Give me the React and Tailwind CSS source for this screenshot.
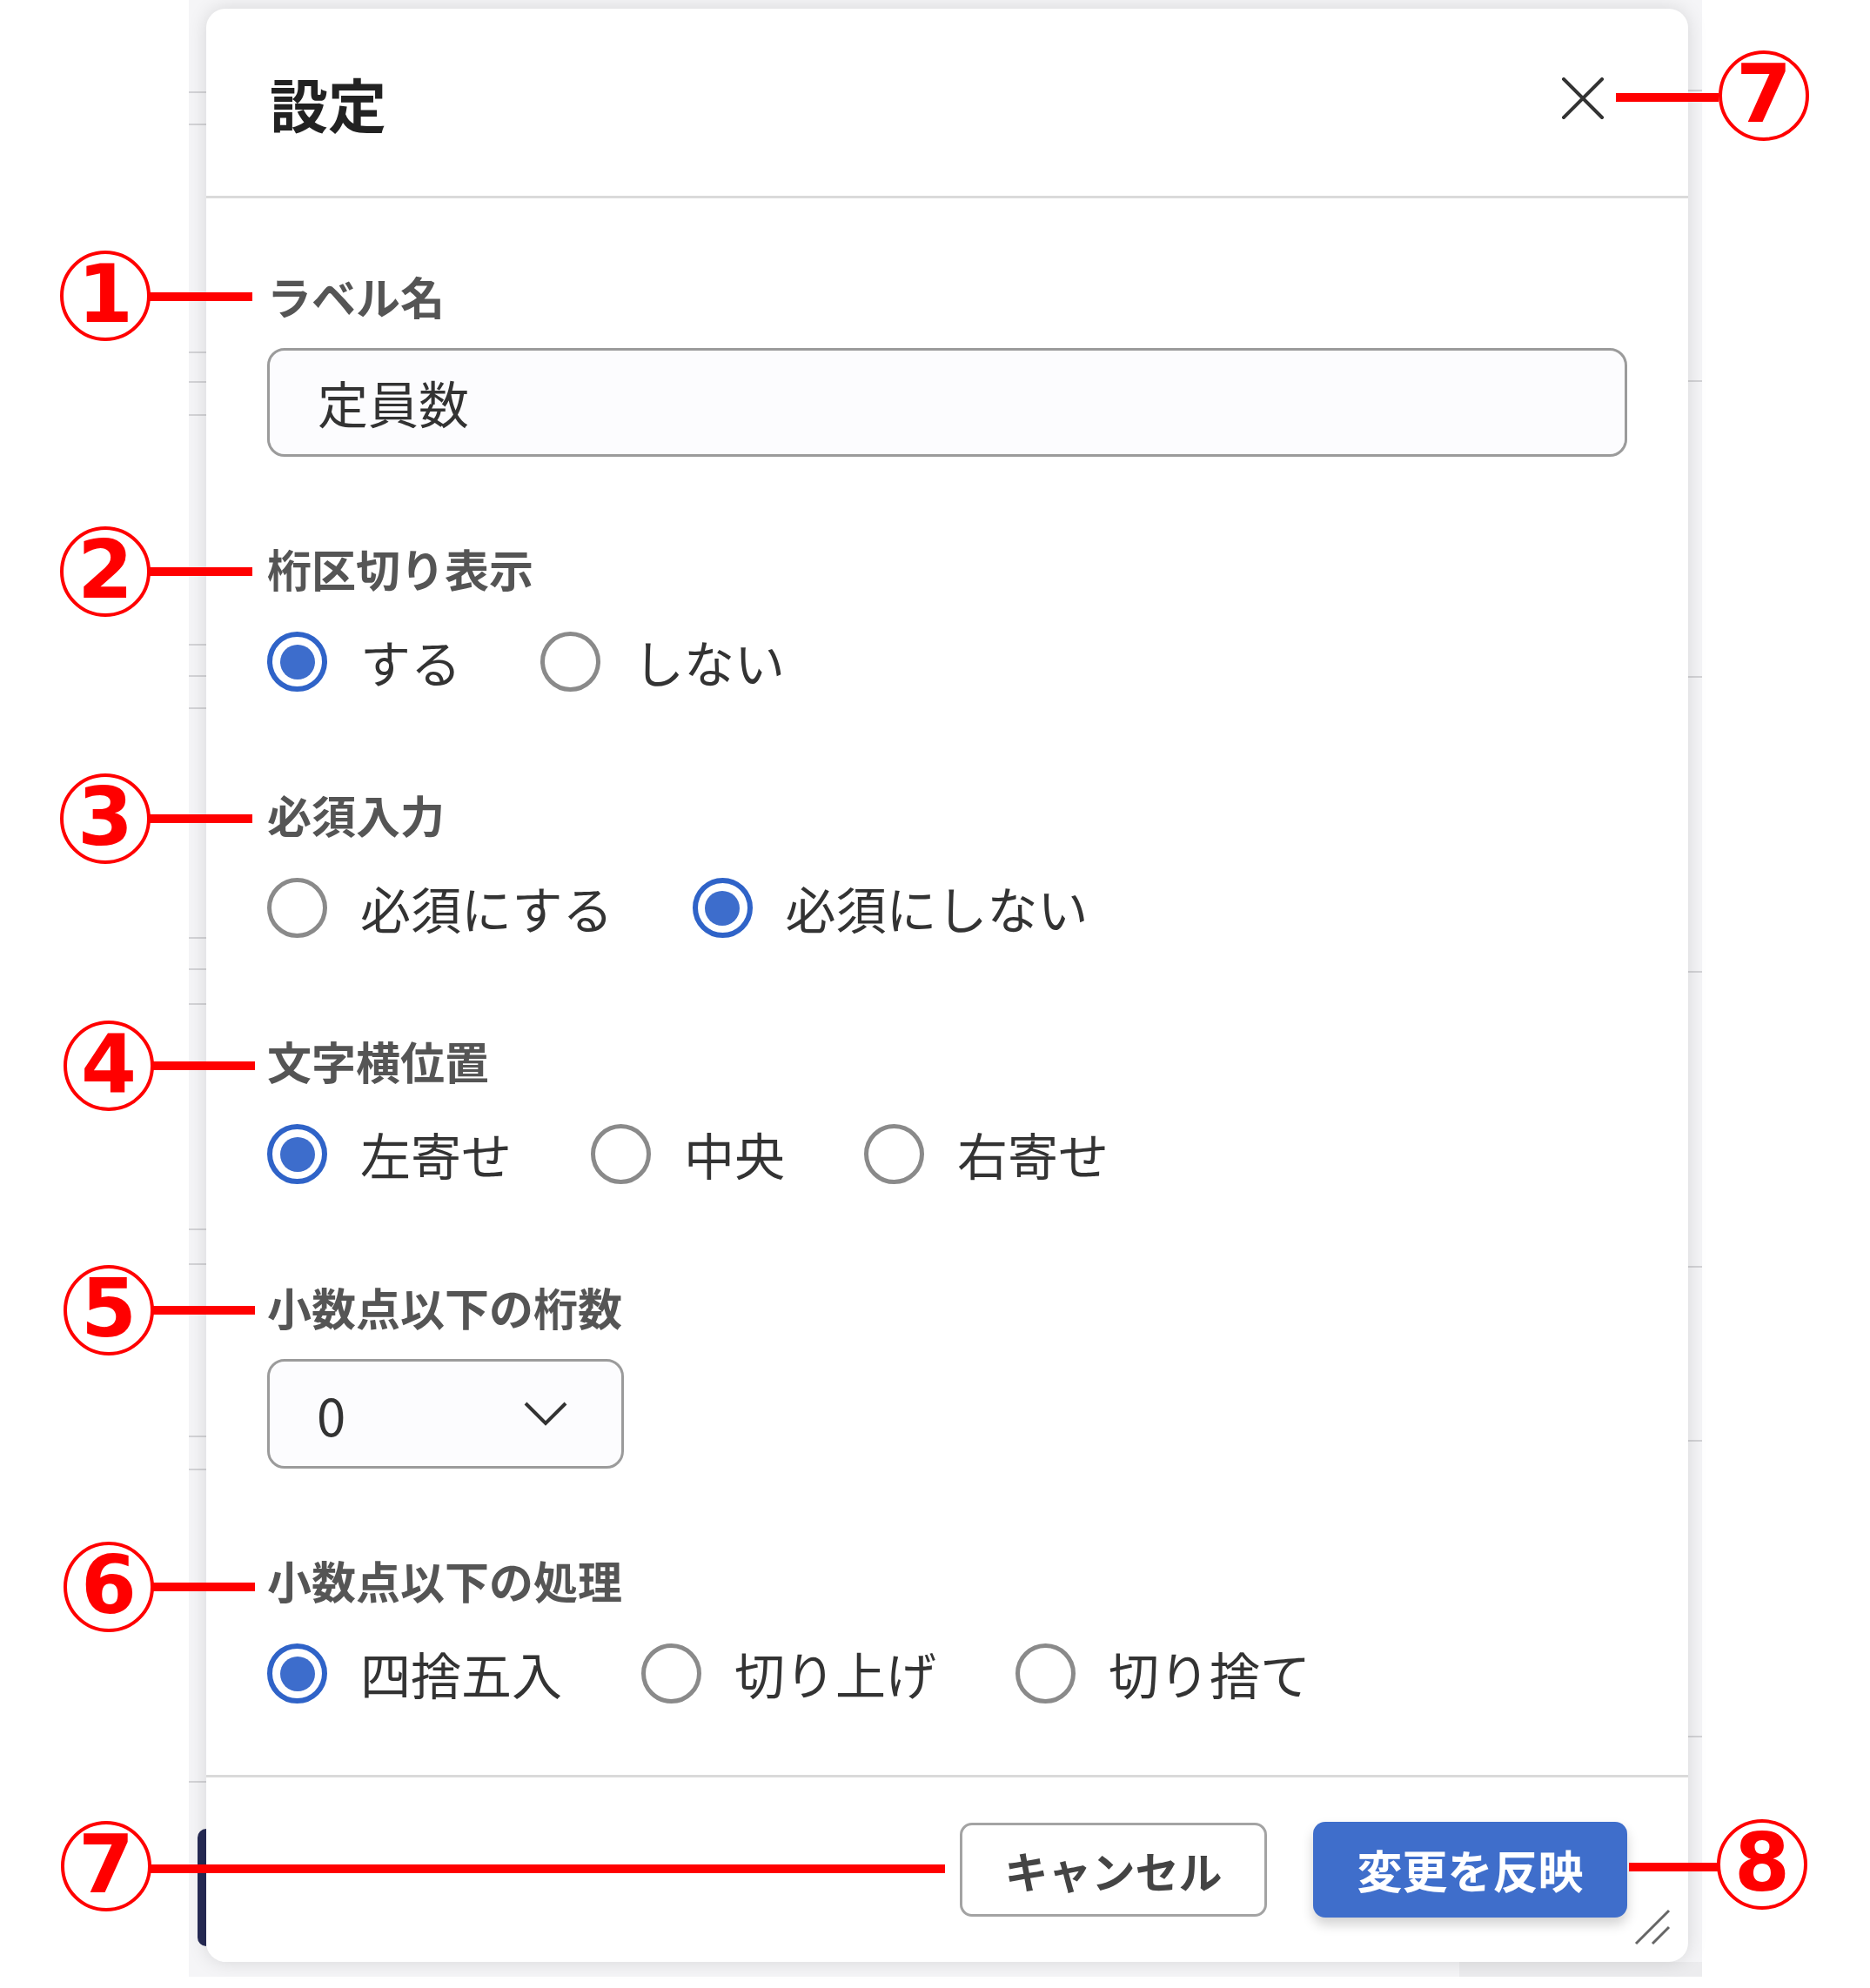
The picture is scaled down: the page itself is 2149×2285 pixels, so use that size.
import React from "react";

const LABEL = "text-[51px] leading-[72px] font-bold text-[#555555]";

function Radio({ checked, label }) {
  return (
    <div className="flex items-center">
      {checked ? (
        <span className="w-[69px] h-[69px] rounded-full border-[6px] border-[#2f63c8] flex items-center justify-center shrink-0">
          <span className="w-[40px] h-[40px] rounded-full bg-[#3d6dcc]" />
        </span>
      ) : (
        <span className="w-[69px] h-[69px] rounded-full border-[5px] border-[#8a8a8a] shrink-0" />
      )}
      <span className="ml-[38px] text-[58px] leading-[87px] text-[#333333] whitespace-nowrap">{label}</span>
    </div>
  );
}

function RadioRow({ items }) {
  return (
    <div className="flex h-[95px] items-center gap-[91px]">
      {items.map((it) => (
        <Radio key={it[0]} label={it[0]} checked={it[1]} />
      ))}
    </div>
  );
}

function Section({ label, children }) {
  return (
    <div className="flex flex-col gap-[24px]">
      <div className={LABEL}>{label}</div>
      {children}
    </div>
  );
}

function Circled({ n, className }) {
  return (
    <div
      className={
        "absolute z-20 w-[104px] h-[104px] rounded-full border-[4px] border-[#ff0000] bg-white flex items-center justify-center font-['DejaVu_Sans',sans-serif] font-bold text-[92px] leading-none text-[#ff0000] " +
        className
      }
    >
      <span className="-mt-[2px]">{n}</span>
    </div>
  );
}

function RedLine({ className }) {
  return <div className={"absolute z-20 h-[10px] bg-[#ff0000] " + className} />;
}

const leftLines = [
  "mt-[95px]", "mt-[35px]", "mt-[260px]", "mt-[32px]", "mt-[36px]", "mt-[262px]", "mt-[34px]", "mt-[35px]",
  "mt-[262px]", "mt-[34px]", "mt-[38px]", "mt-[257px]", "mt-[38px]", "mt-[196px]", "mt-[36px]", "mt-[357px]",
];
const rightLines = ["mt-[93px]", "mt-[332px]", "mt-[338px]", "mt-[337px]", "mt-[337px]", "mt-[198px]", "mt-[338px]"];

export default function App() {
  return (
    <div className="relative w-[2149px] h-[2285px] bg-white overflow-hidden font-['Noto_Sans_CJK_JP','Noto_Sans',sans-serif]">
      {/* background page with modal */}
      <div className="ml-[217px] w-[1739px] h-[2272px] bg-[#f5f5f7] flex flex-col pt-[10px]">
        <div className="flex h-[2245px]">
          {/* left strip of page behind */}
          <div className="w-[20px] flex flex-col">
            {leftLines.map((c, i) => (
              <div key={i} className={"h-[2px] bg-[#d3d3d6] shrink-0 " + c} />
            ))}
            <div className="mt-[53px] ml-[10px] w-[10px] h-[135px] bg-[#262b55] rounded-l-[12px]" />
          </div>

          {/* modal */}
          <div className="relative z-10 w-[1703px] h-[2245px] bg-white rounded-[22px] shadow-[0_0_22px_rgba(0,0,0,0.13)] flex flex-col">
            <div className="h-[218px] shrink-0 border-b-[3px] border-[#dadada] flex items-center justify-between pl-[73px] pr-[97px]">
              <div className="text-[67px] font-bold text-[#222222] leading-none">設定</div>
              <svg width="48" height="48" viewBox="0 0 48 48" className="-mt-[9px]">
                <path d="M2 2 L46 46 M46 2 L2 46" stroke="#333333" strokeWidth="4" fill="none" strokeLinecap="square" />
              </svg>
            </div>

            <div className="flex-1 flex flex-col gap-[92px] pt-[76px] px-[70px]">
              <Section label="ラベル名">
                <div className="h-[125px] w-full border-[3px] border-[#9b9b9b] rounded-[20px] bg-[#fcfcfe] flex items-center pl-[55px] text-[58px] text-[#333333]">
                  定員数
                </div>
              </Section>
              <Section label="桁区切り表示">
                <RadioRow items={[["する", true], ["しない", false]]} />
              </Section>
              <Section label="必須入力">
                <RadioRow items={[["必須にする", false], ["必須にしない", true]]} />
              </Section>
              <Section label="文字横位置">
                <RadioRow items={[["左寄せ", true], ["中央", false], ["右寄せ", false]]} />
              </Section>
              <Section label="小数点以下の桁数">
                <div className="w-[410px] h-[126px] border-[3px] border-[#9b9b9b] rounded-[20px] bg-[#fcfcfe] flex items-center justify-between pl-[54px] pr-[62px]">
                  <span className="text-[60px] text-[#333333] leading-none">0</span>
                  <svg width="50" height="28" viewBox="0 0 50 28">
                    <path d="M2 2 L25 25 L48 2" stroke="#333333" strokeWidth="4" fill="none" />
                  </svg>
                </div>
              </Section>
              <Section label="小数点以下の処理">
                <RadioRow items={[["四捨五入", true], ["切り上げ", false], ["切り捨て", false]]} />
              </Section>
            </div>

            <div className="h-[215px] shrink-0 border-t-[3px] border-[#dadada] flex items-center justify-end gap-[53px] pr-[70px]">
              <button className="w-[353px] h-[108px] border-[3px] border-[#a3a3a3] rounded-[14px] bg-white text-[50px] font-bold text-[#444444] flex items-center justify-center">
                キャンセル
              </button>
              <button className="w-[361px] h-[110px] bg-[#3f6ecb] rounded-[14px] text-[52px] font-bold text-white flex items-center justify-center shadow-[0_8px_14px_rgba(0,0,0,0.18)]">
                変更を反映
              </button>
            </div>

            <svg width="42" height="42" viewBox="0 0 42 42" className="absolute right-[20px] bottom-[19px]">
              <path d="M2 40 L40 2 M21 40 L40 21" stroke="#666666" strokeWidth="3" fill="none" />
            </svg>
          </div>

          {/* right strip */}
          <div className="w-[16px] flex flex-col">
            {rightLines.map((c, i) => (
              <div key={i} className={"h-[2px] bg-[#d3d3d6] shrink-0 " + c} />
            ))}
          </div>
        </div>
        <div className="flex h-[17px]">
          <div className="flex-1" />
          <div className="w-[279px] bg-[#ececee]" />
        </div>
      </div>

      {/* annotations */}
      <RedLine className="left-[172px] w-[118px] top-[336px]" />
      <Circled n="1" className="left-[69px] top-[288px]" />
      <RedLine className="left-[172px] w-[118px] top-[652px]" />
      <Circled n="2" className="left-[69px] top-[605px]" />
      <RedLine className="left-[172px] w-[118px] top-[936px]" />
      <Circled n="3" className="left-[69px] top-[889px]" />
      <RedLine className="left-[176px] w-[117px] top-[1220px]" />
      <Circled n="4" className="left-[73px] top-[1173px]" />
      <RedLine className="left-[176px] w-[117px] top-[1501px]" />
      <Circled n="5" className="left-[73px] top-[1454px]" />
      <RedLine className="left-[176px] w-[117px] top-[1819px]" />
      <Circled n="6" className="left-[73px] top-[1772px]" />

      <RedLine className="left-[1857px] w-[118px] top-[107px]" />
      <Circled n="7" className="left-[1975px] top-[58px]" />

      <RedLine className="left-[172px] w-[914px] top-[2143px]" />
      <Circled n="7" className="left-[70px] top-[2093px]" />

      <RedLine className="left-[1872px] w-[103px] top-[2141px]" />
      <Circled n="8" className="left-[1973px] top-[2091px]" />
    </div>
  );
}
